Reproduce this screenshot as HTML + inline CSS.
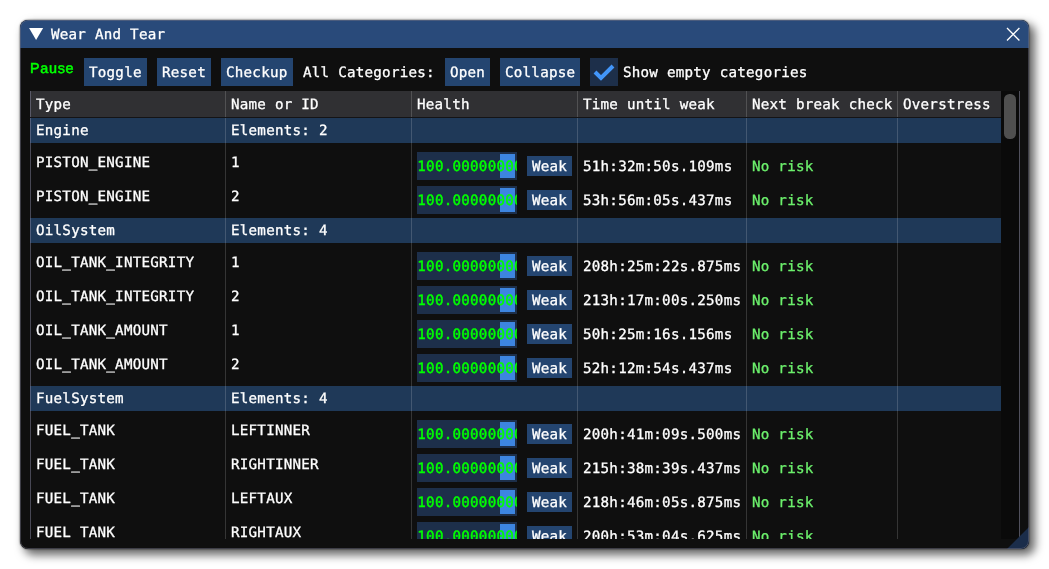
<!DOCTYPE html>
<html lang="en">
<head>
<meta charset="utf-8">
<title>Wear And Tear</title>
<style>
html,body{margin:0;padding:0;}
body{width:1049px;height:569px;background:#fff;position:relative;overflow:hidden;
 font-family:"DejaVu Sans Mono","Liberation Mono",monospace;font-size:14.2px;color:#fff;text-rendering:geometricPrecision;-webkit-text-stroke:.3px currentColor;}
.abs,.win *{position:absolute;box-sizing:border-box;}
.win{position:absolute;left:20px;top:20px;width:1009px;height:529px;background:#0f0f0f;border-radius:8px;
 box-shadow:5px 5px 10px 1px rgba(0,0,0,.6), 0 0 2px rgba(0,0,0,.8);overflow:hidden;will-change:transform;}
.win .edge{left:0;top:0;width:100%;height:100%;border:1px solid rgba(110,110,128,.5);border-radius:8px;}
.title{left:0;top:0;width:1009px;height:28px;background:#294a7a;}
.t{white-space:pre;line-height:18px;height:18px;letter-spacing:.25px;margin-top:1px;}
.btn{background:#244570;height:28px;top:38px;}
.btn .t{left:5px;top:5px;}
.tbl{left:10px;top:71px;width:990px;height:448px;overflow:hidden;}
.hdr{left:0;top:0;width:971px;height:26px;background:#303033;}
.cat{left:0;width:971px;height:25px;background:#1f3958;}
.sep{top:0;width:1px;height:448px;background:rgba(255,255,255,.16);}
.sl{width:100px;height:28px;background:#1d2f4a;overflow:hidden;}
.sl .g{left:83px;top:2px;width:15px;height:24px;background:#3d85e0;}
.sl .t{left:.3px;top:5px;color:#00ff00;-webkit-text-stroke:.45px #00ff00;}
.wk{width:45px;height:20px;background:#244570;}
.wk .t{left:5px;top:1px;}
.gr{color:#6cf06c;}
</style>
</head>
<body>
<div class="win">

<div class="title"></div>
<svg style="left:0;top:0" width="1009" height="28" viewBox="20 20 1009 28"><polygon points="29.05,28.05 43.15,28.05 36.1,40.1" fill="#fff"/><path d="M1007 28.05 L1019.4 40.45 M1019.4 28.05 L1007 40.45" stroke="#fff" stroke-width="1.3" fill="none"/></svg>
<div class="t" style="left:31px;top:5px">Wear And Tear</div>
<div class="t" style="left:10px;top:39px;font-family:'Liberation Sans',sans-serif;font-size:14.4px;color:#00ff00;letter-spacing:.7px;-webkit-text-stroke:.55px #00ff00">Pause</div>
<div class="btn" style="left:64px;width:63px"><div class="t">Toggle</div></div>
<div class="btn" style="left:137px;width:54px"><div class="t">Reset</div></div>
<div class="btn" style="left:201px;width:72px"><div class="t">Checkup</div></div>
<div class="btn" style="left:425px;width:45px"><div class="t">Open</div></div>
<div class="btn" style="left:480px;width:80px"><div class="t">Collapse</div></div>
<div class="t" style="left:283px;top:43px">All Categories:</div>
<div style="left:570px;top:38px;width:28px;height:28px;background:#1d2f4a"><svg style="left:0;top:0" width="28" height="28" viewBox="590 58 28 28"><path d="M595 72 L601 78 L613 66" stroke="#4296fa" stroke-width="4" fill="none"/></svg></div>
<div class="t" style="left:603px;top:43px">Show empty categories</div>
<div class="tbl">
<div class="hdr"></div>
<div class="t" style="left:6px;top:4px">Type</div>
<div class="t" style="left:201px;top:4px">Name or ID</div>
<div class="t" style="left:387px;top:4px">Health</div>
<div class="t" style="left:553px;top:4px">Time until weak</div>
<div class="t" style="left:722px;top:4px">Next break check</div>
<div class="t" style="left:873px;top:4px">Overstress</div>
<div class="cat" style="top:27px"></div>
<div class="t" style="left:6px;top:30px">Engine</div>
<div class="t" style="left:201px;top:30px">Elements: 2</div>
<div class="t" style="left:6px;top:62px">PISTON_ENGINE</div>
<div class="t" style="left:201px;top:62px">1</div>
<div class="sl" style="left:387px;top:61px"><div class="g"></div><div class="t">100.00000000</div></div>
<div class="wk" style="left:497px;top:65px"><div class="t">Weak</div></div>
<div class="t" style="left:553px;top:66px">51h:32m:50s.109ms</div>
<div class="t gr" style="left:722px;top:66px">No risk</div>
<div class="t" style="left:6px;top:96px">PISTON_ENGINE</div>
<div class="t" style="left:201px;top:96px">2</div>
<div class="sl" style="left:387px;top:95px"><div class="g"></div><div class="t">100.00000000</div></div>
<div class="wk" style="left:497px;top:99px"><div class="t">Weak</div></div>
<div class="t" style="left:553px;top:100px">53h:56m:05s.437ms</div>
<div class="t gr" style="left:722px;top:100px">No risk</div>
<div class="cat" style="top:127px"></div>
<div class="t" style="left:6px;top:130px">OilSystem</div>
<div class="t" style="left:201px;top:130px">Elements: 4</div>
<div class="t" style="left:6px;top:162px">OIL_TANK_INTEGRITY</div>
<div class="t" style="left:201px;top:162px">1</div>
<div class="sl" style="left:387px;top:161px"><div class="g"></div><div class="t">100.00000000</div></div>
<div class="wk" style="left:497px;top:165px"><div class="t">Weak</div></div>
<div class="t" style="left:553px;top:166px">208h:25m:22s.875ms</div>
<div class="t gr" style="left:722px;top:166px">No risk</div>
<div class="t" style="left:6px;top:196px">OIL_TANK_INTEGRITY</div>
<div class="t" style="left:201px;top:196px">2</div>
<div class="sl" style="left:387px;top:195px"><div class="g"></div><div class="t">100.00000000</div></div>
<div class="wk" style="left:497px;top:199px"><div class="t">Weak</div></div>
<div class="t" style="left:553px;top:200px">213h:17m:00s.250ms</div>
<div class="t gr" style="left:722px;top:200px">No risk</div>
<div class="t" style="left:6px;top:230px">OIL_TANK_AMOUNT</div>
<div class="t" style="left:201px;top:230px">1</div>
<div class="sl" style="left:387px;top:229px"><div class="g"></div><div class="t">100.00000000</div></div>
<div class="wk" style="left:497px;top:233px"><div class="t">Weak</div></div>
<div class="t" style="left:553px;top:234px">50h:25m:16s.156ms</div>
<div class="t gr" style="left:722px;top:234px">No risk</div>
<div class="t" style="left:6px;top:264px">OIL_TANK_AMOUNT</div>
<div class="t" style="left:201px;top:264px">2</div>
<div class="sl" style="left:387px;top:263px"><div class="g"></div><div class="t">100.00000000</div></div>
<div class="wk" style="left:497px;top:267px"><div class="t">Weak</div></div>
<div class="t" style="left:553px;top:268px">52h:12m:54s.437ms</div>
<div class="t gr" style="left:722px;top:268px">No risk</div>
<div class="cat" style="top:295px"></div>
<div class="t" style="left:6px;top:298px">FuelSystem</div>
<div class="t" style="left:201px;top:298px">Elements: 4</div>
<div class="t" style="left:6px;top:330px">FUEL_TANK</div>
<div class="t" style="left:201px;top:330px">LEFTINNER</div>
<div class="sl" style="left:387px;top:329px"><div class="g"></div><div class="t">100.00000000</div></div>
<div class="wk" style="left:497px;top:333px"><div class="t">Weak</div></div>
<div class="t" style="left:553px;top:334px">200h:41m:09s.500ms</div>
<div class="t gr" style="left:722px;top:334px">No risk</div>
<div class="t" style="left:6px;top:364px">FUEL_TANK</div>
<div class="t" style="left:201px;top:364px">RIGHTINNER</div>
<div class="sl" style="left:387px;top:363px"><div class="g"></div><div class="t">100.00000000</div></div>
<div class="wk" style="left:497px;top:367px"><div class="t">Weak</div></div>
<div class="t" style="left:553px;top:368px">215h:38m:39s.437ms</div>
<div class="t gr" style="left:722px;top:368px">No risk</div>
<div class="t" style="left:6px;top:398px">FUEL_TANK</div>
<div class="t" style="left:201px;top:398px">LEFTAUX</div>
<div class="sl" style="left:387px;top:397px"><div class="g"></div><div class="t">100.00000000</div></div>
<div class="wk" style="left:497px;top:401px"><div class="t">Weak</div></div>
<div class="t" style="left:553px;top:402px">218h:46m:05s.875ms</div>
<div class="t gr" style="left:722px;top:402px">No risk</div>
<div class="t" style="left:6px;top:432px">FUEL_TANK</div>
<div class="t" style="left:201px;top:432px">RIGHTAUX</div>
<div class="sl" style="left:387px;top:431px"><div class="g"></div><div class="t">100.00000000</div></div>
<div class="wk" style="left:497px;top:435px"><div class="t">Weak</div></div>
<div class="t" style="left:553px;top:436px">200h:53m:04s.625ms</div>
<div class="t gr" style="left:722px;top:436px">No risk</div>
<div class="sep" style="left:0;background:rgba(130,130,155,.5)"></div>
<div class="sep" style="left:195px"></div>
<div class="sep" style="left:381px"></div>
<div class="sep" style="left:547px"></div>
<div class="sep" style="left:716px"></div>
<div class="sep" style="left:867px"></div>
<div style="left:0;top:26px;width:971px;height:1px;background:#141416"></div>
<div style="left:971px;top:0;width:18px;height:448px;background:#0a0a0a"></div>
<div style="left:974px;top:3px;width:12px;height:45px;border-radius:5.5px;background:#4f4f4f"></div>
<div class="sep" style="left:989px;background:#50505c"></div>
</div>
<svg style="left:0;top:0" width="1009" height="529" viewBox="20 20 1009 529"><polygon points="1029,527 1029,549 1007,549" fill="#1b2d4a"/></svg>
<div class="edge"></div>
</div>
</body>
</html>
